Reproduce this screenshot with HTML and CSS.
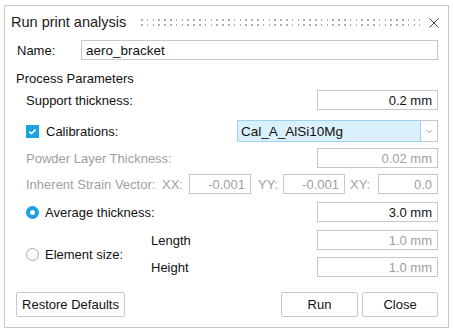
FILE: index.html
```html
<!DOCTYPE html>
<html>
<head>
<meta charset="utf-8">
<link rel="stylesheet" href="styles.css">
</head>
<body>
<div class="dialog">
  <div class="titlebar">
    <span class="title">Run print analysis</span>
    <div class="grip"></div>
    <svg class="close" width="10" height="10" viewBox="0 0 10 10"><path d="M0.5 0.5 L9.5 9.5 M9.5 0.5 L0.5 9.5" stroke="#444" stroke-width="1" fill="none"/></svg>
  </div>
  <div class="content">
    <div class="row name-row">
      <span class="name-label">Name:</span>
      <div class="field name-field">aero_bracket</div>
    </div>
    <div class="row section">Process Parameters</div>
    <div class="row indent support-row">
      <span>Support thickness:</span>
      <div class="field num">0.2 mm</div>
    </div>
    <div class="row indent calib-row">
      <span class="checkbox"><svg width="13" height="13" viewBox="0 0 13 13"><path d="M3.3 6.6 L5.5 8.7 L9.7 4.4" stroke="#fff" stroke-width="1.6" fill="none"/></svg></span>
      <span>Calibrations:</span>
      <div class="combo">
        <div class="combo-value">Cal_A_AlSi10Mg</div>
        <div class="combo-arrow"><svg width="7" height="5" viewBox="0 0 7 5"><path d="M0.5 0.8 L3.5 3.8 L6.5 0.8" stroke="#9a9a9a" stroke-width="1" fill="none"/></svg></div>
      </div>
    </div>
    <div class="row indent disabled powder-row">
      <span>Powder Layer Thickness:</span>
      <div class="field num">0.02 mm</div>
    </div>
    <div class="row indent disabled strain-row">
      <span class="sv-label">Inherent Strain Vector:</span>
      <span class="xx">XX:</span>
      <div class="field num w62">-0.001</div>
      <span class="yy">YY:</span>
      <div class="field num w62">-0.001</div>
      <span class="xy">XY:</span>
      <div class="field num w60">0.0</div>
    </div>
    <div class="row indent avg-row">
      <span class="radio on"></span>
      <span>Average thickness:</span>
      <div class="field num">3.0 mm</div>
    </div>
    <div class="row indent elem-group">
      <div class="elem-left">
        <span class="radio"></span>
        <span>Element size:</span>
      </div>
      <div class="elem-right">
        <div class="sub-row">
          <span class="sub-label">Length</span>
          <div class="field num disabled-field">1.0 mm</div>
        </div>
        <div class="sub-row">
          <span class="sub-label">Height</span>
          <div class="field num disabled-field">1.0 mm</div>
        </div>
      </div>
    </div>
    <div class="row buttons">
      <button class="btn restore">Restore Defaults</button>
      <button class="btn run">Run</button>
      <button class="btn close-btn">Close</button>
    </div>
  </div>
</div>
</body>
</html>
```

FILE: styles.css
```css
html, body {
  margin: 0;
  padding: 0;
  background: #fff;
}
body {
  font-family: "Liberation Sans", Arial, sans-serif;
  font-size: 13px;
  color: #111;
}
.dialog {
  box-sizing: border-box;
  margin: 5px 0 0 4px;
  width: 445px;
  height: 323px;
  border: 1px solid #c8c8c8;
  background: #fff;
}
.titlebar {
  height: 32px;
  display: flex;
  align-items: center;
  padding: 0 9px 0 6px;
}
.title {
  font-size: 14.5px;
  color: #1a1a1a;
}
.grip {
  flex: 1;
  height: 7px;
  margin: 1px 9px 0 15px;
  background:
    repeating-linear-gradient(90deg, #adadad 0 1.6px, transparent 1.6px 5.8px) left top / 100% 2px no-repeat,
    repeating-linear-gradient(90deg, #adadad 0 1.6px, transparent 1.6px 5.8px) left bottom / 100% 2px no-repeat;
}
.close {
  display: block;
  margin-top: 1px;
}
.content {
  padding: 0 10px 0 0;
}
.row {
  display: flex;
  align-items: center;
  height: 20px;
}
.indent {
  padding-left: 21px;
}
.name-row {
  margin-top: 2px;
  padding-left: 12px;
}
.name-label {
  width: 64px;
}
.field {
  box-sizing: border-box;
  height: 20px;
  border: 1px solid #c8c8c8;
  background: #fff;
  display: flex;
  align-items: center;
  padding: 0 5px;
  white-space: nowrap;
}
.name-field {
  flex: 1;
  padding-left: 4px;
  font-size: 13.5px;
}
.num {
  justify-content: flex-end;
  width: 121px;
  margin-left: auto;
}
.section {
  margin-top: 8px;
  padding-left: 11px;
}
.support-row {
  margin-top: 2px;
}
.calib-row {
  margin-top: 10px;
  height: 22px;
}
.checkbox {
  box-sizing: border-box;
  width: 13px;
  height: 13px;
  background: #1ba1e2;
  margin-right: 7px;
  display: block;
}
.checkbox svg {
  display: block;
}
.combo {
  margin-left: auto;
  width: 201px;
  height: 22px;
  display: flex;
}
.combo-value {
  box-sizing: border-box;
  flex: 1;
  height: 22px;
  background: #daf1fc;
  border: 1px solid #9fd3ef;
  display: flex;
  align-items: center;
  padding-left: 3px;
  font-size: 13.5px;
}
.combo-arrow {
  box-sizing: border-box;
  width: 17px;
  height: 22px;
  border: 1px solid #c8c8c8;
  border-left: none;
  display: flex;
  align-items: center;
  justify-content: center;
}
.combo-arrow svg {
  display: block;
}
.disabled {
  color: #a0a0a0;
}
.disabled .field, .disabled-field {
  color: #a0a0a0;
}
.powder-row {
  margin-top: 6px;
}
.strain-row {
  margin-top: 6px;
}
.sv-label {
  width: 136px;
  white-space: nowrap;
}
.xx {
  width: 27px;
}
.yy {
  box-sizing: border-box;
  width: 32px;
  padding-left: 7px;
}
.xy {
  box-sizing: border-box;
  width: 33px;
  padding-left: 5px;
}
.strain-row .field {
  margin-left: 0;
}
.w62 {
  width: 62px;
}
.w60 {
  width: 60px;
}
.avg-row {
  margin-top: 8px;
}
.radio {
  box-sizing: border-box;
  width: 13px;
  height: 13px;
  border-radius: 50%;
  border: 1px solid #a8a8a8;
  background: #fff;
  margin-right: 6px;
  display: block;
}
.radio.on {
  border: 4px solid #1ba1e2;
}
.elem-group {
  margin-top: 8px;
  height: auto;
  align-items: stretch;
}
.elem-left {
  width: 125px;
  display: flex;
  align-items: center;
  padding-top: 2px;
}
.elem-right {
  flex: 1;
  display: flex;
  flex-direction: column;
  gap: 7px;
}
.sub-row {
  display: flex;
  align-items: center;
  height: 20px;
}
.buttons {
  margin-top: 15px;
  height: 25px;
  padding-left: 11px;
  gap: 4px;
}
.btn {
  box-sizing: border-box;
  height: 25px;
  border: 1px solid #c8c8c8;
  border-radius: 2px;
  background: #fff;
  font-family: "Liberation Sans", Arial, sans-serif;
  font-size: 13px;
  color: #111;
  padding: 0;
}
.restore {
  width: 109px;
  margin-right: auto;
}
.run {
  width: 77px;
}
.close-btn {
  width: 76px;
}
```
